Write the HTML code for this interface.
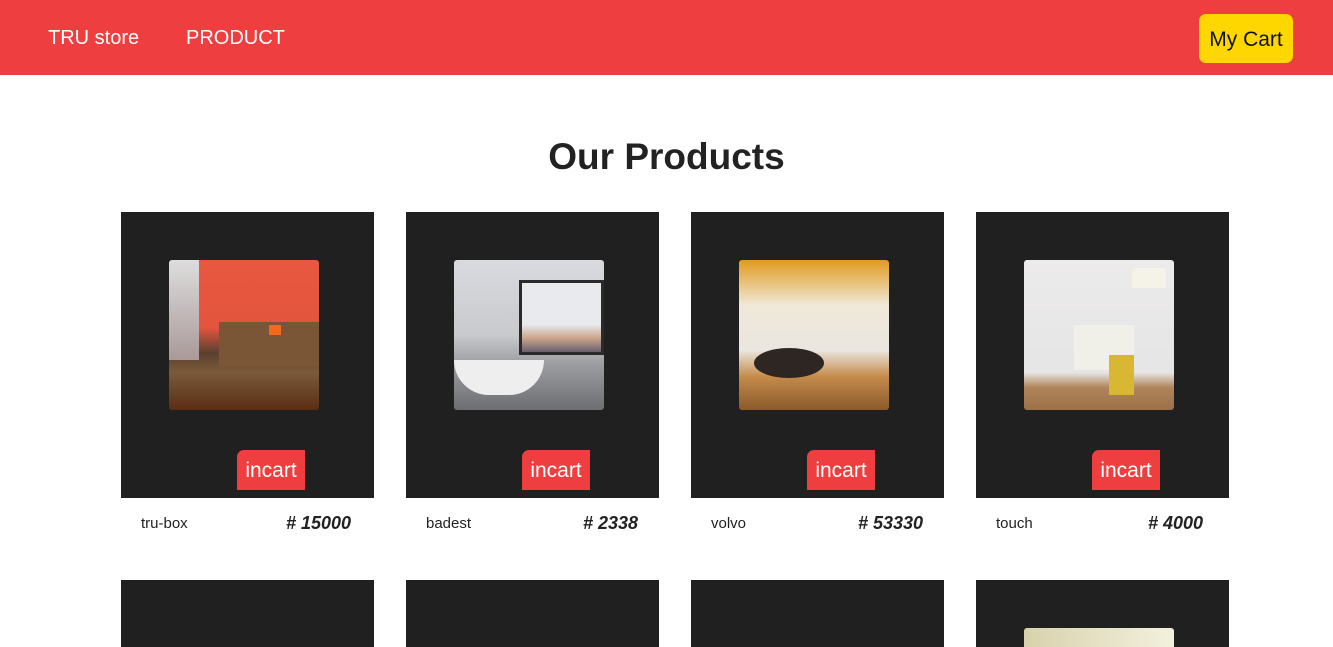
<!DOCTYPE html>
<html style="width:1333px;height:647px;overflow:hidden"><head><meta charset="utf-8"><style>
*{margin:0;padding:0;box-sizing:border-box}
body{width:1333px;height:647px;overflow:hidden;background:#fff;font-family:"Liberation Sans","DejaVu Sans",sans-serif;position:relative}
.nav{position:absolute;left:0;top:0;width:1333px;height:75px;background:#ef3e40}
.nav a{position:absolute;top:27px;color:#fff;font-size:20px;text-decoration:none}
.cart{position:absolute;left:1199px;top:14px;width:94px;height:49px;background:#ffd700;border-radius:7px;font-size:21px;color:#111;text-align:center;line-height:51px}
h1{position:absolute;left:0;width:1333px;top:136px;text-align:center;font-size:37px;font-weight:bold;color:#222}
.card{position:absolute;width:253px;height:286px;background:#212020;overflow:hidden}
.img{position:absolute;left:48px;top:48px;width:150px;height:150px;border-radius:3px;overflow:hidden}
.btn{position:absolute;left:116px;top:238px;width:68px;height:40px;background:#ef3e40;color:#fff;font-size:21px;text-align:center;line-height:42px;border-top-left-radius:7px}
.name{position:absolute;font-size:15px;color:#222;top:515px}
.price{position:absolute;font-size:18px;color:#222;font-weight:bold;font-style:italic;top:513px}
</style></head><body>
<div class="nav"><a style="left:48px">TRU store</a><a style="left:186px">PRODUCT</a><div class="cart">My Cart</div></div>
<h1>Our Products</h1>

<div class="card" style="left:121px;top:212px"><div class="img" style="background:linear-gradient(180deg,#e8573f 0%,#e4553e 45%,#5a4030 62%,#7a5a3a 75%,#5b2e14 100%)"><div style="position:absolute;left:0;top:0;width:30px;height:100px;background:linear-gradient(#ddd,#a99)"></div><div style="position:absolute;left:50px;top:62px;width:100px;height:45px;background:#7a5636"></div><div style="position:absolute;left:100px;top:65px;width:12px;height:10px;background:#f26a1a"></div></div><div class="btn">incart</div></div>
<div class="card" style="left:406px;top:212px"><div class="img" style="background:linear-gradient(180deg,#d8dadf 0%,#c8cace 50%,#9a9ca0 70%,#6c6e72 100%)"><div style="position:absolute;left:65px;top:20px;width:85px;height:75px;background:linear-gradient(#e8eaee 60%,#c9a58a 80%,#6a6070);border:3px solid #2a2a2a"></div><div style="position:absolute;left:0;top:100px;width:90px;height:35px;background:#eee;border-radius:0 0 40px 40px"></div></div><div class="btn">incart</div></div>
<div class="card" style="left:691px;top:212px"><div class="img" style="background:linear-gradient(180deg,#e19a1e 0%,#f0e8d8 30%,#eae6e0 60%,#c48a4a 78%,#8a5a2a 100%)"><div style="position:absolute;left:15px;top:88px;width:70px;height:30px;background:#2e2622;border-radius:50%"></div></div><div class="btn">incart</div></div>
<div class="card" style="left:976px;top:212px"><div class="img" style="background:linear-gradient(180deg,#ecebeb 0%,#e6e5e5 75%,#b0855a 85%,#9c7048 100%)"><div style="position:absolute;left:108px;top:8px;width:34px;height:20px;background:#f5f2e8;border-radius:4px 4px 0 0"></div><div style="position:absolute;left:50px;top:65px;width:60px;height:45px;background:#f0efe8"></div><div style="position:absolute;left:85px;top:95px;width:25px;height:40px;background:#d8b832"></div></div><div class="btn">incart</div></div>

<div class="name" style="left:141px">tru-box</div><div class="price" style="left:286px"># 15000</div>
<div class="name" style="left:426px">badest</div><div class="price" style="left:583px"># 2338</div>
<div class="name" style="left:711px">volvo</div><div class="price" style="left:858px"># 53330</div>
<div class="name" style="left:996px">touch</div><div class="price" style="left:1148px"># 4000</div>

<div class="card" style="left:121px;top:580px;height:67px"></div>
<div class="card" style="left:406px;top:580px;height:67px"></div>
<div class="card" style="left:691px;top:580px;height:67px"></div>
<div class="card" style="left:976px;top:580px;height:67px"><div class="img" style="background:linear-gradient(90deg,#d8d2ac,#f3f0de)"></div></div>
</body></html>
